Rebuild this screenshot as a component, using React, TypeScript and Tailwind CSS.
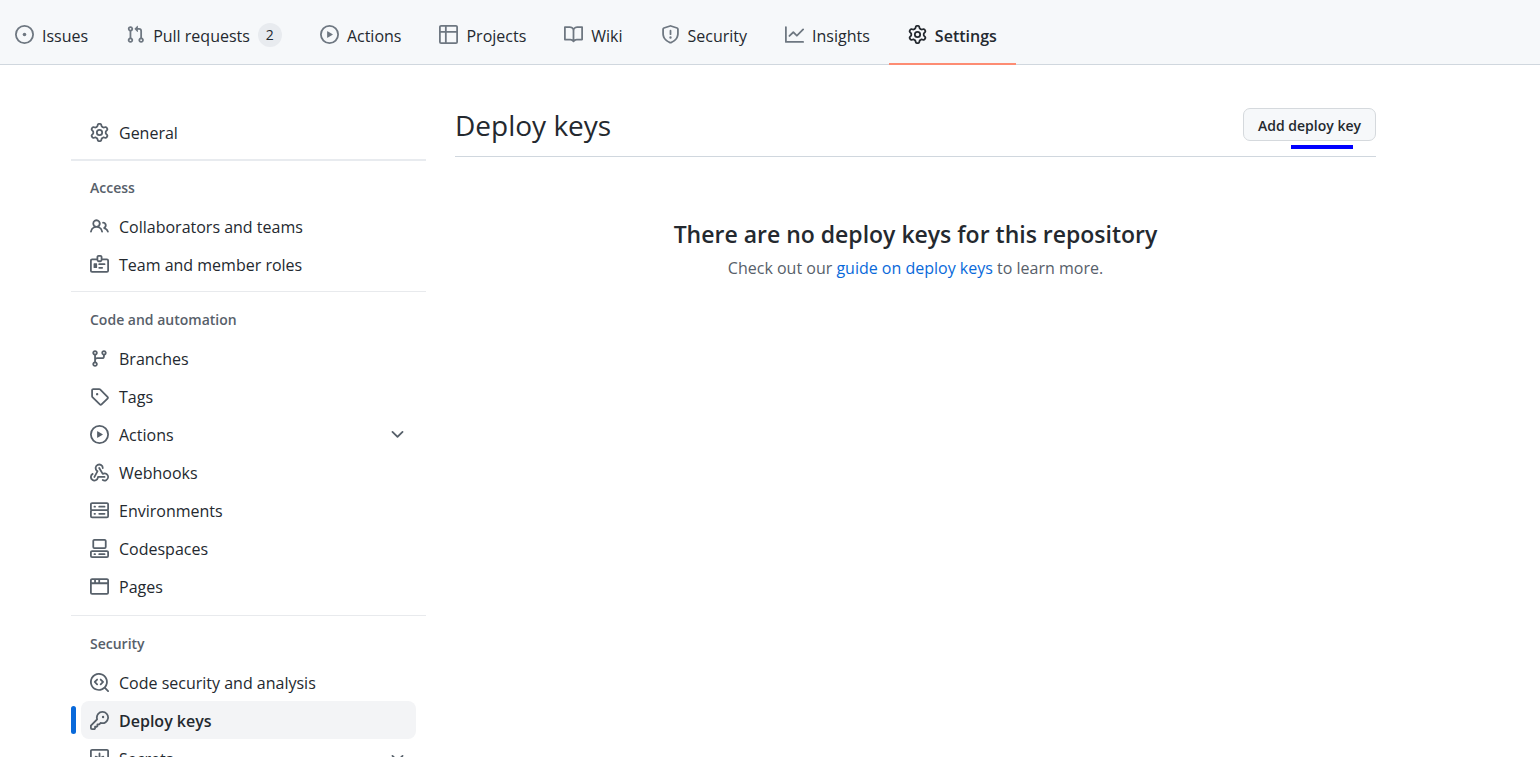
const icons = {
  issue: ["M8 9.5a1.5 1.5 0 1 0 0-3 1.5 1.5 0 0 0 0 3Z", "M8 0a8 8 0 1 1 0 16A8 8 0 0 1 8 0ZM1.5 8a6.5 6.5 0 1 0 13 0 6.5 6.5 0 0 0-13 0Z"],
  pull: ["M1.5 3.25a2.25 2.25 0 1 1 3 2.122v5.256a2.251 2.251 0 1 1-1.5 0V5.372A2.25 2.25 0 0 1 1.5 3.25Zm5.677-.177L9.573.677A.25.25 0 0 1 10 .854V2.5h1A2.5 2.5 0 0 1 13.5 5v5.628a2.251 2.251 0 1 1-1.5 0V5a1 1 0 0 0-1-1h-1v1.646a.25.25 0 0 1-.427.177L7.177 3.427a.25.25 0 0 1 0-.354ZM3.75 2.5a.75.75 0 1 0 0 1.5.75.75 0 0 0 0-1.5Zm0 9.5a.75.75 0 1 0 0 1.5.75.75 0 0 0 0-1.5Zm8.25.75a.75.75 0 1 0 1.5 0 .75.75 0 0 0-1.5 0Z"],
  play: ["M8 0a8 8 0 1 1 0 16A8 8 0 0 1 8 0ZM1.5 8a6.5 6.5 0 1 0 13 0 6.5 6.5 0 0 0-13 0Zm4.879-2.773 4.264 2.559a.25.25 0 0 1 0 .428l-4.264 2.559A.25.25 0 0 1 6 10.559V5.442a.25.25 0 0 1 .379-.215Z"],
  table: ["M0 1.75C0 .784.784 0 1.75 0h12.5C15.216 0 16 .784 16 1.75v12.5A1.75 1.75 0 0 1 14.25 16H1.75A1.75 1.75 0 0 1 0 14.25ZM6.5 6.5v8h7.75a.25.25 0 0 0 .25-.25V6.5Zm8-1.5V1.75a.25.25 0 0 0-.25-.25H6.5V5Zm-13 1.5v7.75c0 .138.112.25.25.25H5v-8ZM5 5V1.5H1.75a.25.25 0 0 0-.25.25V5Z"],
  book: ["M0 1.75A.75.75 0 0 1 .75 1h4.253c1.227 0 2.317.59 3 1.501A3.743 3.743 0 0 1 11.006 1h4.245a.75.75 0 0 1 .75.75v10.5a.75.75 0 0 1-.75.75h-4.507a2.25 2.25 0 0 0-1.591.659l-.622.621a.75.75 0 0 1-1.06 0l-.622-.621A2.25 2.25 0 0 0 5.258 13H.75a.75.75 0 0 1-.75-.75Zm7.251 10.324.004-5.073-.002-2.253A2.25 2.25 0 0 0 5.003 2.5H1.5v9h3.757a3.75 3.75 0 0 1 1.994.574ZM8.755 4.75l-.004 7.322a3.752 3.752 0 0 1 1.992-.572H14.5v-9h-3.495a2.25 2.25 0 0 0-2.25 2.25Z"],
  shield: ["M7.467.133a1.748 1.748 0 0 1 1.066 0l5.25 1.68A1.75 1.75 0 0 1 15 3.48V7c0 1.566-.32 3.182-1.303 4.682-.983 1.498-2.585 2.813-5.032 3.855a1.697 1.697 0 0 1-1.33 0c-2.447-1.042-4.049-2.357-5.032-3.855C1.32 10.182 1 8.566 1 7V3.48a1.755 1.755 0 0 1 1.217-1.667Zm.61 1.429a.25.25 0 0 0-.153 0l-5.25 1.68a.25.25 0 0 0-.174.238V7c0 1.358.275 2.666 1.057 3.86.784 1.194 2.121 2.34 4.366 3.297a.196.196 0 0 0 .154 0c2.245-.956 3.582-2.104 4.366-3.298C13.225 9.666 13.5 8.36 13.5 7V3.48a.251.251 0 0 0-.174-.237l-5.25-1.68ZM8.75 4.75v3a.75.75 0 0 1-1.5 0v-3a.75.75 0 0 1 1.5 0ZM9 10.5a1 1 0 1 1-2 0 1 1 0 0 1 2 0Z"],
  graph: ["M1.5 1.75V13.5h13.75a.75.75 0 0 1 0 1.5H.75a.75.75 0 0 1-.75-.75V1.75a.75.75 0 0 1 1.5 0Zm14.28 2.53-5.25 5.25a.75.75 0 0 1-1.06 0L7 7.06 4.28 9.78a.751.751 0 0 1-1.042-.018.751.751 0 0 1-.018-1.042l3.25-3.25a.75.75 0 0 1 1.06 0L10 7.94l4.72-4.72a.751.751 0 0 1 1.042.018.751.751 0 0 1 .018 1.042Z"],
  gear: ["M8 0a8.2 8.2 0 0 1 .701.031C9.444.095 9.99.645 10.16 1.29l.288 1.107c.018.066.079.158.212.224.231.114.454.243.668.386.123.082.233.09.299.071l1.103-.303c.644-.176 1.392.021 1.82.63.27.385.506.792.704 1.218.315.675.111 1.422-.364 1.891l-.814.806c-.049.048-.098.147-.088.294.016.257.016.515 0 .772-.01.147.038.246.088.294l.814.806c.475.469.679 1.216.364 1.891a7.977 7.977 0 0 1-.704 1.217c-.428.61-1.176.807-1.82.63l-1.102-.302c-.067-.019-.177-.011-.3.071a5.909 5.909 0 0 1-.668.386c-.133.066-.194.158-.211.224l-.29 1.106c-.168.646-.715 1.196-1.458 1.26a8.006 8.006 0 0 1-1.402 0c-.743-.064-1.289-.614-1.458-1.26l-.289-1.106c-.018-.066-.079-.158-.212-.224a5.738 5.738 0 0 1-.668-.386c-.123-.082-.233-.09-.299-.071l-1.103.303c-.644.176-1.392-.021-1.82-.63a8.12 8.12 0 0 1-.704-1.218c-.315-.675-.111-1.422.363-1.891l.815-.806c.05-.048.098-.147.088-.294a6.214 6.214 0 0 1 0-.772c.01-.147-.038-.246-.088-.294l-.815-.806C.635 6.045.431 5.298.746 4.623a7.92 7.92 0 0 1 .704-1.217c.428-.61 1.176-.807 1.82-.63l1.102.302c.067.019.177.011.3-.071.214-.143.437-.272.668-.386.133-.066.194-.158.211-.224l.29-1.106C6.009.645 6.556.095 7.299.03 7.53.01 7.764 0 8 0Zm-.571 1.525c-.036.003-.108.036-.137.146l-.289 1.105c-.147.561-.549.967-.998 1.189-.173.086-.34.183-.5.29-.417.278-.97.423-1.529.27l-1.103-.303c-.109-.03-.175.016-.195.045-.22.312-.412.644-.573.99-.014.031-.021.11.059.19l.815.806c.411.406.562.957.53 1.456a4.709 4.709 0 0 0 0 .582c.032.499-.119 1.05-.53 1.456l-.815.806c-.081.08-.073.159-.059.19.162.346.353.677.573.989.02.03.085.076.195.046l1.102-.303c.56-.153 1.113-.008 1.53.27.161.107.328.204.501.29.447.222.85.629.997 1.189l.289 1.105c.029.109.101.143.137.146a6.6 6.6 0 0 0 1.142 0c.036-.003.108-.036.137-.146l.289-1.105c.147-.561.549-.967.998-1.189.173-.086.34-.183.5-.29.417-.278.97-.423 1.529-.27l1.103.303c.109.029.175-.016.195-.045.22-.313.411-.644.573-.99.014-.031.021-.11-.059-.19l-.815-.806c-.411-.406-.562-.957-.53-1.456a4.709 4.709 0 0 0 0-.582c-.032-.499.119-1.05.53-1.456l.815-.806c.081-.08.073-.159.059-.19a6.464 6.464 0 0 0-.573-.989c-.02-.03-.085-.076-.195-.046l-1.102.303c-.56.153-1.113.008-1.53-.27a4.44 4.44 0 0 0-.501-.29c-.447-.222-.85-.629-.997-1.189l-.289-1.105c-.029-.11-.101-.143-.137-.146a6.6 6.6 0 0 0-1.142 0ZM11 8a3 3 0 1 1-6 0 3 3 0 0 1 6 0ZM9.5 8a1.5 1.5 0 1 0-3.001.001A1.5 1.5 0 0 0 9.5 8Z"],
  people: ["M2 5.5a3.5 3.5 0 1 1 5.898 2.549 5.508 5.508 0 0 1 3.034 4.084.75.75 0 1 1-1.482.235 4 4 0 0 0-7.9 0 .75.75 0 0 1-1.482-.236A5.507 5.507 0 0 1 3.102 8.05 3.493 3.493 0 0 1 2 5.5ZM11 4a3.001 3.001 0 0 1 2.22 5.018 5.01 5.01 0 0 1 2.56 3.012.749.749 0 0 1-.885.954.752.752 0 0 1-.549-.514 3.507 3.507 0 0 0-2.522-2.372.75.75 0 0 1-.574-.73v-.352a.75.75 0 0 1 .416-.672A1.5 1.5 0 0 0 11 5.5.75.75 0 0 1 11 4Zm-5.5-.5a2 2 0 1 0-.001 3.999A2 2 0 0 0 5.5 3.5Z"],
  badge: ["M3 7.5a.5.5 0 0 1 .5-.5h2a.5.5 0 0 1 .5.5v3a.5.5 0 0 1-.5.5h-2a.5.5 0 0 1-.5-.5Zm10 .25a.75.75 0 0 1-.75.75h-4.5a.75.75 0 0 1 0-1.5h4.5a.75.75 0 0 1 .75.75ZM10.25 11.5h-2.5a.75.75 0 0 1 0-1.5h2.5a.75.75 0 0 1 0 1.5Z", "M7.25 0h1.5c.966 0 1.75.784 1.75 1.75V3h3.75c.966 0 1.75.784 1.75 1.75v8.5A1.75 1.75 0 0 1 14.25 15H1.75A1.75 1.75 0 0 1 0 13.25v-8.5C0 3.784.784 3 1.75 3H5.5V1.75C5.5.784 6.284 0 7.25 0Zm3.232 4.5A1.75 1.75 0 0 1 8.75 6h-1.5a1.75 1.75 0 0 1-1.732-1.5H1.75a.25.25 0 0 0-.25.25v8.5c0 .138.112.25.25.25h12.5a.25.25 0 0 0 .25-.25v-8.5a.25.25 0 0 0-.25-.25ZM7 1.75v2.5c0 .138.112.25.25.25h1.5A.25.25 0 0 0 9 4.25v-2.5a.25.25 0 0 0-.25-.25h-1.5a.25.25 0 0 0-.25.25Z"],
  branch: ["M9.5 3.25a2.25 2.25 0 1 1 3 2.122V6A2.5 2.5 0 0 1 10 8.5H6a1 1 0 0 0-1 1v1.128a2.251 2.251 0 1 1-1.5 0V5.372a2.25 2.25 0 1 1 1.5 0v1.836A2.493 2.493 0 0 1 6 7h4a1 1 0 0 0 1-1v-.628A2.25 2.25 0 0 1 9.5 3.25Zm-6 0a.75.75 0 1 0 1.5 0 .75.75 0 0 0-1.5 0Zm8.25-.75a.75.75 0 1 0 0 1.5.75.75 0 0 0 0-1.5ZM4.25 12a.75.75 0 1 0 0 1.5.75.75 0 0 0 0-1.5Z"],
  tag: ["M1 7.775V2.75C1 1.784 1.784 1 2.75 1h5.025c.464 0 .91.184 1.238.513l6.25 6.25a1.75 1.75 0 0 1 0 2.474l-5.026 5.026a1.75 1.75 0 0 1-2.474 0l-6.25-6.25A1.752 1.752 0 0 1 1 7.775Zm1.5 0c0 .066.026.13.073.177l6.25 6.25a.25.25 0 0 0 .354 0l5.025-5.025a.25.25 0 0 0 0-.354l-6.25-6.25a.25.25 0 0 0-.177-.073H2.75a.25.25 0 0 0-.25.25ZM6 5a1 1 0 1 1 0 2 1 1 0 0 1 0-2Z"],
  webhook: ["M5.5 4.25a2.25 2.25 0 0 1 4.5 0 .75.75 0 0 0 1.5 0 3.75 3.75 0 1 0-6.14 2.889l-2.272 4.258a.75.75 0 0 0 1.324.706L7 7.25a.75.75 0 0 0-.309-1.015A2.25 2.25 0 0 1 5.5 4.25Z", "M7.364 3.607a.75.75 0 0 1 1.03.257l2.608 4.349a3.75 3.75 0 1 1-.628 6.785.75.75 0 0 1 .752-1.299 2.25 2.25 0 1 0-.033-3.88.75.75 0 0 1-1.03-.256L7.107 4.636a.75.75 0 0 1 .257-1.03Z", "M2.9 8.776A.75.75 0 0 1 2.625 9.8 2.25 2.25 0 1 0 6 11.75a.75.75 0 0 1 .75-.751h5.5a.75.75 0 0 1 0 1.5H7.425a3.751 3.751 0 1 1-5.55-3.998.75.75 0 0 1 1.024.274Z"],
  server: ["M1.75 1h12.5c.966 0 1.75.784 1.75 1.75v4c0 .372-.116.717-.314 1 .198.283.314.628.314 1v4a1.75 1.75 0 0 1-1.75 1.75H1.75A1.75 1.75 0 0 1 0 12.75v-4c0-.358.109-.707.314-1a1.739 1.739 0 0 1-.314-1v-4C0 1.784.784 1 1.75 1ZM1.5 2.75v4c0 .138.112.25.25.25h12.5a.25.25 0 0 0 .25-.25v-4a.25.25 0 0 0-.25-.25H1.75a.25.25 0 0 0-.25.25Zm.25 5.75a.25.25 0 0 0-.25.25v4c0 .138.112.25.25.25h12.5a.25.25 0 0 0 .25-.25v-4a.25.25 0 0 0-.25-.25ZM7 4.75A.75.75 0 0 1 7.75 4h4.5a.75.75 0 0 1 0 1.5h-4.5A.75.75 0 0 1 7 4.75ZM7.75 10h4.5a.75.75 0 0 1 0 1.5h-4.5a.75.75 0 0 1 0-1.5ZM3 4.75A.75.75 0 0 1 3.75 4h.5a.75.75 0 0 1 0 1.5h-.5A.75.75 0 0 1 3 4.75ZM3.75 10h.5a.75.75 0 0 1 0 1.5h-.5a.75.75 0 0 1 0-1.5Z"],
  codespaces: ["M0 11.25c0-.966.784-1.75 1.75-1.75h12.5c.966 0 1.75.784 1.75 1.75v3A1.75 1.75 0 0 1 14.25 16H1.75A1.75 1.75 0 0 1 0 14.25Zm2-9.5C2 .784 2.784 0 3.75 0h8.5C13.216 0 14 .784 14 1.75v5a1.75 1.75 0 0 1-1.75 1.75h-8.5A1.75 1.75 0 0 1 2 6.75Zm1.75-.25a.25.25 0 0 0-.25.25v5c0 .138.112.25.25.25h8.5a.25.25 0 0 0 .25-.25v-5a.25.25 0 0 0-.25-.25Zm-2 9.5a.25.25 0 0 0-.25.25v3c0 .138.112.25.25.25h12.5a.25.25 0 0 0 .25-.25v-3a.25.25 0 0 0-.25-.25Z", "M7 12.75a.75.75 0 0 1 .75-.75h4.5a.75.75 0 0 1 0 1.5h-4.5a.75.75 0 0 1-.75-.75Zm-4 0a.75.75 0 0 1 .75-.75h.5a.75.75 0 0 1 0 1.5h-.5a.75.75 0 0 1-.75-.75Z"],
  browser: ["M0 2.75C0 1.784.784 1 1.75 1h12.5c.966 0 1.75.784 1.75 1.75v10.5A1.75 1.75 0 0 1 14.25 15H1.75A1.75 1.75 0 0 1 0 13.25ZM14.5 6h-13v7.25c0 .138.112.25.25.25h12.5a.25.25 0 0 0 .25-.25Zm-6-3.5v2h6V2.75a.25.25 0 0 0-.25-.25ZM5 2.5v2h2v-2Zm-3.25 0a.25.25 0 0 0-.25.25V4.5h2v-2Z"],
  codescan: ["M8.47 4.97a.75.75 0 0 0 0 1.06L9.94 7.5 8.47 8.97a.75.75 0 1 0 1.06 1.06l2-2a.75.75 0 0 0 0-1.06l-2-2a.75.75 0 0 0-1.06 0ZM6.53 6.03a.75.75 0 0 0-1.06-1.06l-2 2a.75.75 0 0 0 0 1.06l2 2a.75.75 0 1 0 1.06-1.06L5.06 7.5l1.47-1.47Z", "M12.246 13.307a7.501 7.501 0 1 1 1.06-1.06l2.474 2.473a.749.749 0 1 1-1.06 1.06l-2.474-2.473ZM1.5 7.5a6.002 6.002 0 0 0 3.608 5.504 6.002 6.002 0 0 0 6.486-1.117.748.748 0 0 1 .292-.293A6 6 0 1 0 1.5 7.5Z"],
  key: ["M10.5 0a5.499 5.499 0 1 1-1.288 10.848l-.932.932a.749.749 0 0 1-.53.22H7v.75a.749.749 0 0 1-.22.53l-.5.5a.749.749 0 0 1-.53.22H5v.75a.749.749 0 0 1-.22.53l-.5.5a.749.749 0 0 1-.53.22h-2A1.75 1.75 0 0 1 0 14.25v-2c0-.199.079-.389.22-.53l4.932-4.932A5.5 5.5 0 0 1 10.5 0Zm-4 5.5c-.001.431.069.86.205 1.269a.75.75 0 0 1-.181.768L1.5 12.56v1.69c0 .138.112.25.25.25h1.69l.06-.06v-1.19a.75.75 0 0 1 .75-.75h1.19l.06-.06v-1.19a.75.75 0 0 1 .75-.75h1.19l1.023-1.025a.75.75 0 0 1 .768-.18A4 4 0 1 0 6.5 5.5ZM11 6a1 1 0 1 1 0-2 1 1 0 0 1 0 2Z"],
  secret: ["M1.75 0h12.5C15.216 0 16 .784 16 1.75v12.5A1.75 1.75 0 0 1 14.25 16H1.75A1.75 1.75 0 0 1 0 14.25V1.75C0 .784.784 0 1.75 0ZM1.5 1.75v12.5c0 .138.112.25.25.25h12.5a.25.25 0 0 0 .25-.25V1.75a.25.25 0 0 0-.25-.25H1.75a.25.25 0 0 0-.25.25Z", "M8 3a.75.75 0 0 1 .75.75V6.7l2.19-.97a.75.75 0 0 1 .6 1.37L9.5 8l1.69 1.97a.75.75 0 0 1-1.1 1.02L8 9.1l-2.09 1.89a.75.75 0 0 1-1.1-1.02L6.5 8l-2.04-.9a.75.75 0 0 1 .6-1.37l2.19.97V3.75A.75.75 0 0 1 8 3Z"],
  chevron: ["M12.78 5.22a.749.749 0 0 1 0 1.06l-4.25 4.25a.749.749 0 0 1-1.06 0L3.22 6.28a.749.749 0 1 1 1.06-1.06L8 8.939l3.72-3.719a.749.749 0 0 1 1.06 0Z"],
};

type IconName = keyof typeof icons;

function Icon({ name, className = "" }: { name: IconName; className?: string }) {
  return (
    <svg viewBox="0 0 16 16" fill="currentColor" aria-hidden="true" className={`size-[19px] shrink-0 ${className}`}>
      {icons[name].map((d) => (
        <path key={d} d={d} fillRule="evenodd" />
      ))}
    </svg>
  );
}

type Item = { label: string; icon: IconName; count?: number; active?: boolean; expandable?: boolean };

const tabs: Item[] = [
  { label: "Issues", icon: "issue" },
  { label: "Pull requests", icon: "pull", count: 2 },
  { label: "Actions", icon: "play" },
  { label: "Projects", icon: "table" },
  { label: "Wiki", icon: "book" },
  { label: "Security", icon: "shield" },
  { label: "Insights", icon: "graph" },
  { label: "Settings", icon: "gear", active: true },
];

const groups: { title: string; rule: string; items: Item[] }[] = [
  {
    title: "Access",
    rule: "mt-2 border-t-2 border-[#e8ebef] pt-[17px]",
    items: [
      { label: "Collaborators and teams", icon: "people" },
      { label: "Team and member roles", icon: "badge" },
    ],
  },
  {
    title: "Code and automation",
    rule: "mt-2 border-t border-[#e8eaed] pt-[18px]",
    items: [
      { label: "Branches", icon: "branch" },
      { label: "Tags", icon: "tag" },
      { label: "Actions", icon: "play", expandable: true },
      { label: "Webhooks", icon: "webhook" },
      { label: "Environments", icon: "server" },
      { label: "Codespaces", icon: "codespaces" },
      { label: "Pages", icon: "browser" },
    ],
  },
  {
    title: "Security",
    rule: "mt-[10px] border-t border-[#e8eaed] pt-[18px]",
    items: [
      { label: "Code security and analysis", icon: "codescan" },
      { label: "Deploy keys", icon: "key", active: true },
      { label: "Secrets", icon: "secret", expandable: true },
    ],
  },
];

function Tab({ label, icon, count, active }: Item) {
  return (
    <a
      href="#"
      aria-current={active ? "page" : undefined}
      className={`-mb-px flex items-center gap-2 border-b-2 px-[19px] pt-[6px] ${active ? "border-[#fd8c73] font-semibold" : "border-transparent"}`}
    >
      <Icon name={icon} className={active ? "" : "text-[#6e7781]"} />
      <span className="pt-0.5">{label}</span>
      {count !== undefined && (
        <span className="flex size-6 items-center justify-center rounded-full bg-[#e8ebef] text-sm font-medium">{count}</span>
      )}
    </a>
  );
}

function SideItem({ label, icon, active, expandable }: Item) {
  const look = `flex h-[38px] w-full items-center gap-[10px] rounded-lg px-[9px] text-left ${active ? "bg-[#f3f4f6] font-semibold" : ""}`;
  const content = (
    <>
      <Icon name={icon} className="text-[#57606a]" />
      <span className="flex-1 pt-0.5">{label}</span>
      {expandable && <Icon name="chevron" className="text-[#57606a]" />}
    </>
  );
  return (
    <li className="relative px-[10px]">
      {active && <span className="absolute top-[5px] left-0 h-7 w-[5px] rounded-sm bg-[#0969da]" />}
      {expandable ? (
        <button type="button" aria-expanded="false" className={look}>{content}</button>
      ) : (
        <a href="#" aria-current={active ? "page" : undefined} className={look}>{content}</a>
      )}
    </li>
  );
}

export default function App() {
  return (
    <div className="flex h-screen flex-col overflow-hidden bg-white font-['Open_Sans',sans-serif] text-base text-[#24292f]">
      <nav aria-label="Repository" className="flex h-[65px] shrink-0 border-b border-[#d0d7de] bg-[#f6f8fa] whitespace-nowrap">
        <div className="-ml-1 flex">
          {tabs.map((tab) => (
            <Tab key={tab.label} {...tab} />
          ))}
        </div>
      </nav>

      <div className="flex gap-[29px] pr-[164px] pl-[71px]">
        <nav aria-label="Settings" className="w-[355px] shrink-0 pt-12">
          <ul>
            <SideItem label="General" icon="gear" />
          </ul>
          {groups.map((group) => (
            <section key={group.title} className={group.rule}>
              <h2 className="mb-[9px] pl-[19px] text-sm leading-5 font-semibold text-[#57606a]">{group.title}</h2>
              <ul>
                {group.items.map((item) => (
                  <SideItem key={item.label} {...item} />
                ))}
              </ul>
            </section>
          ))}
        </nav>

        <main className="min-w-0 flex-1 pt-[43px]">
          <header className="flex items-start justify-between border-b border-[#d0d7de] pb-[13px]">
            <h1 className="text-[28px] leading-[35px]">Deploy keys</h1>
            <div className="relative">
              <button type="button" className="h-[33px] rounded-[7px] border border-[#d5d9dd] bg-[#f6f8fa] px-[14px] pt-0.5 text-sm font-semibold">
                Add deploy key
              </button>
              <span className="absolute right-[23px] -bottom-2 h-1 w-[62px] bg-[#0000ff]" />
            </div>
          </header>
          <div className="pt-[59px] text-center">
            <h2 className="text-[23px] leading-9 font-semibold">There are no deploy keys for this repository</h2>
            <p className="leading-8 text-[#57606a]">
              Check out our <a href="#" className="text-[#0969da]">guide on deploy keys</a> to learn more.
            </p>
          </div>
        </main>
      </div>
    </div>
  );
}
